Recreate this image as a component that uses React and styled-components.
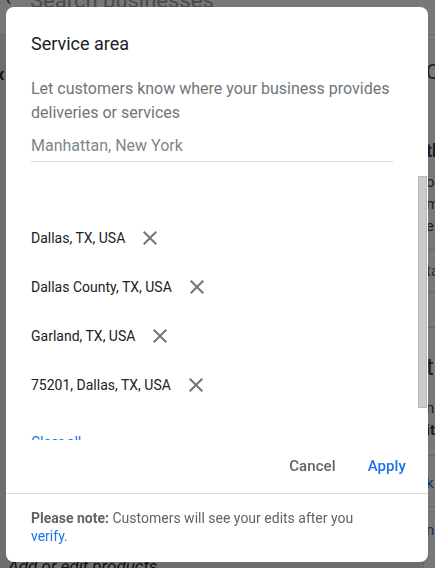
import React from 'react'
import styled, { createGlobalStyle } from 'styled-components'

const GlobalStyle = createGlobalStyle`
  * { box-sizing: border-box; }
  html, body { margin: 0; padding: 0; }
  body {
    font-family: Roboto, "Noto Sans", Arial, sans-serif;
    width: 435px;
    height: 568px;
    overflow: hidden;
  }
`

const areas = [
  'Dallas, TX, USA',
  'Dallas County, TX, USA',
  'Garland, TX, USA',
  '75201, Dallas, TX, USA'
]

function CloseIcon () {
  return (
    <svg width='24' height='24' viewBox='0 0 24 24' fill='#757575'>
      <path d='M19 6.41L17.59 5 12 10.59 6.41 5 5 6.41 10.59 12 5 17.59 6.41 19 12 13.41 17.59 19 19 17.59 13.41 12z' />
    </svg>
  )
}

function BackdropPage () {
  return (
    <Page>
      <TopBar>
        <svg width='14' height='14' viewBox='0 0 24 24' fill='#3c4043' style={{ marginTop: -6 }}>
          <path d='M15.41 7.41L14 6l-6 6 6 6 1.41-1.41L10.83 12z' />
        </svg>
        <SearchText>Search businesses</SearchText>
      </TopBar>
      <PageBody>
        <MainColumn>
          <CutGlyph>x</CutGlyph>
          <BottomLine>Add or edit products</BottomLine>
        </MainColumn>
        <SideColumn>
          <SideText size={20} gap={24}>C</SideText>
          <SideText size={18} bold gap={52}>th</SideText>
          <SideText gap={8}>o</SideText>
          <SideText>m</SideText>
          <SideText>er</SideText>
          <SideRule gap={12} />
          <SideText blue gap={10}>ta</SideText>
          <SideRule gap={10} />
          <SideRule gap={34} />
          <SideText size={24} gap={24}>t</SideText>
          <SideText gap={14}>n</SideText>
          <SideText bold>it</SideText>
          <SideRule gap={14} />
          <SideText blue gap={16}>k</SideText>
          <SideRule gap={12} />
          <SideText blue gap={12}>ne</SideText>
        </SideColumn>
      </PageBody>
    </Page>
  )
}

function App () {
  return (
    <>
      <GlobalStyle />
      <BackdropPage />
      <Overlay />
      <Dialog>
        <Title>Service area</Title>
        <Description>
          Let customers know where your business provides deliveries or services
        </Description>
        <AreaInput placeholder='Manhattan, New York' />
        <AreaList>
          <AreaItems>
            {areas.map(area => (
              <AreaRow key={area}>
                <AreaName>{area}</AreaName>
                <RemoveButton aria-label={'Remove ' + area}><CloseIcon /></RemoveButton>
              </AreaRow>
            ))}
            <AreaRow last>
              <LinkText>Clear all</LinkText>
            </AreaRow>
          </AreaItems>
          <ScrollTrack>
            <ScrollThumb style={{ height: 232 }} />
          </ScrollTrack>
        </AreaList>
        <Actions>
          <TextButton>Cancel</TextButton>
          <TextButton primary>Apply</TextButton>
        </Actions>
        <Note>
          <strong>Please note:</strong> Customers will see your edits after you <LinkText as='a'>verify.</LinkText>
        </Note>
      </Dialog>
    </>
  )
}

const Page = styled.div`
  width: 435px;
  height: 568px;
  display: flex;
  flex-direction: column;
  background: #e8eaed;
  overflow: hidden;
`

const TopBar = styled.div`
  height: 35px;
  flex-shrink: 0;
  display: flex;
  align-items: flex-start;
  gap: 14px;
  padding-left: 2px;
  background: #ffffff;
  border-bottom: 1px solid #dadce0;
  overflow: hidden;
`

const SearchText = styled.span`
  margin-top: -13px;
  font-size: 22px;
  line-height: 28px;
  color: #9aa0a6;
`

const PageBody = styled.div`
  flex: 1;
  display: flex;
  min-height: 0;
`

const MainColumn = styled.div`
  width: 428px;
  flex-shrink: 0;
  display: flex;
  flex-direction: column;
  justify-content: space-between;
  margin-left: -4px;
  border-right: 1px solid #dadce0;
`

const CutGlyph = styled.span`
  margin-top: 30px;
  font-size: 16px;
  font-weight: 700;
  color: #202124;
`

const BottomLine = styled.span`
  margin: 0 0 -8px 12px;
  font-size: 17px;
  line-height: 20px;
  font-style: italic;
  color: #202124;
`

const SideColumn = styled.div`
  flex: 1;
  display: flex;
  flex-direction: column;
  padding-left: 2px;
  background: #ffffff;
`

const SideText = styled.span`
  margin-top: ${p => (p.gap || 0)}px;
  font-size: ${p => p.size || 15}px;
  line-height: ${p => (p.size || 15) + 7}px;
  font-weight: ${p => (p.bold ? 700 : 400)};
  color: ${p => (p.blue ? '#1967d2' : '#3c4043')};
  white-space: nowrap;
`

const SideRule = styled.div`
  margin-top: ${p => p.gap}px;
  height: 1px;
  background: #dadce0;
`

const Overlay = styled.div`
  position: fixed;
  inset: 0;
  background: rgba(0, 0, 0, 0.53);
`

const Dialog = styled.div`
  position: fixed;
  top: 7px;
  left: 6px;
  width: 422px;
  display: flex;
  flex-direction: column;
  background: #ffffff;
  border-radius: 8px;
  overflow: hidden;
`

const Title = styled.h2`
  margin: 25px 25px 0;
  font-size: 18px;
  line-height: 24px;
  font-weight: 400;
  color: #202124;
`

const Description = styled.p`
  margin: 21px 25px 0;
  font-size: 16px;
  line-height: 24px;
  color: #70757a;
`

const AreaInput = styled.input`
  margin: 6px 0 0 25px;
  width: 362px;
  height: 31px;
  padding: 0 0 2px;
  border: none;
  border-bottom: 1px solid #dadce0;
  outline: none;
  font-family: inherit;
  font-size: 16px;
  color: #202124;
  background: transparent;

  &::placeholder { color: #80868b; }
`

const AreaList = styled.div`
  margin-top: 14px;
  height: 264px;
  display: flex;
  overflow: hidden;
`

const AreaItems = styled.div`
  flex: 1;
  padding: 37px 0 0 25px;
  overflow: hidden;
`

const ScrollTrack = styled.div`
  width: 10px;
  flex-shrink: 0;
  background: #ffffff;
`

const ScrollThumb = styled.div`
  width: 9px;
  background: #cbcbcb;
  border: 1px solid #b9b9b9;
`

const AreaRow = styled.div`
  height: 49px;
  margin-top: ${p => (p.last ? 8 : 0)}px;
  display: flex;
  align-items: center;
  gap: 13px;
`

const AreaName = styled.span`
  font-size: 14px;
  color: #202124;
`

const RemoveButton = styled.button`
  width: 24px;
  height: 24px;
  padding: 0;
  border: none;
  background: none;
  display: flex;
  cursor: pointer;
`

const LinkText = styled.span`
  font-size: 14px;
  color: #1a73e8;
  text-decoration: none;
`

const Actions = styled.div`
  height: 54px;
  display: flex;
  align-items: center;
  justify-content: flex-end;
  gap: 16px;
  padding: 0 14px 2px 0;
  border-bottom: 1px solid #dadce0;
`

const TextButton = styled.button`
  padding: 8px;
  border: none;
  background: none;
  font-family: inherit;
  font-size: 15px;
  font-weight: 500;
  letter-spacing: 0.1px;
  color: ${p => (p.primary ? '#1a73e8' : '#5f6368')};
  cursor: pointer;
`

const Note = styled.p`
  margin: 0;
  padding: 15px 50px 17px 25px;
  font-size: 14px;
  line-height: 18px;
  color: #5f6368;

  strong { font-weight: 700; }
`

export default App
